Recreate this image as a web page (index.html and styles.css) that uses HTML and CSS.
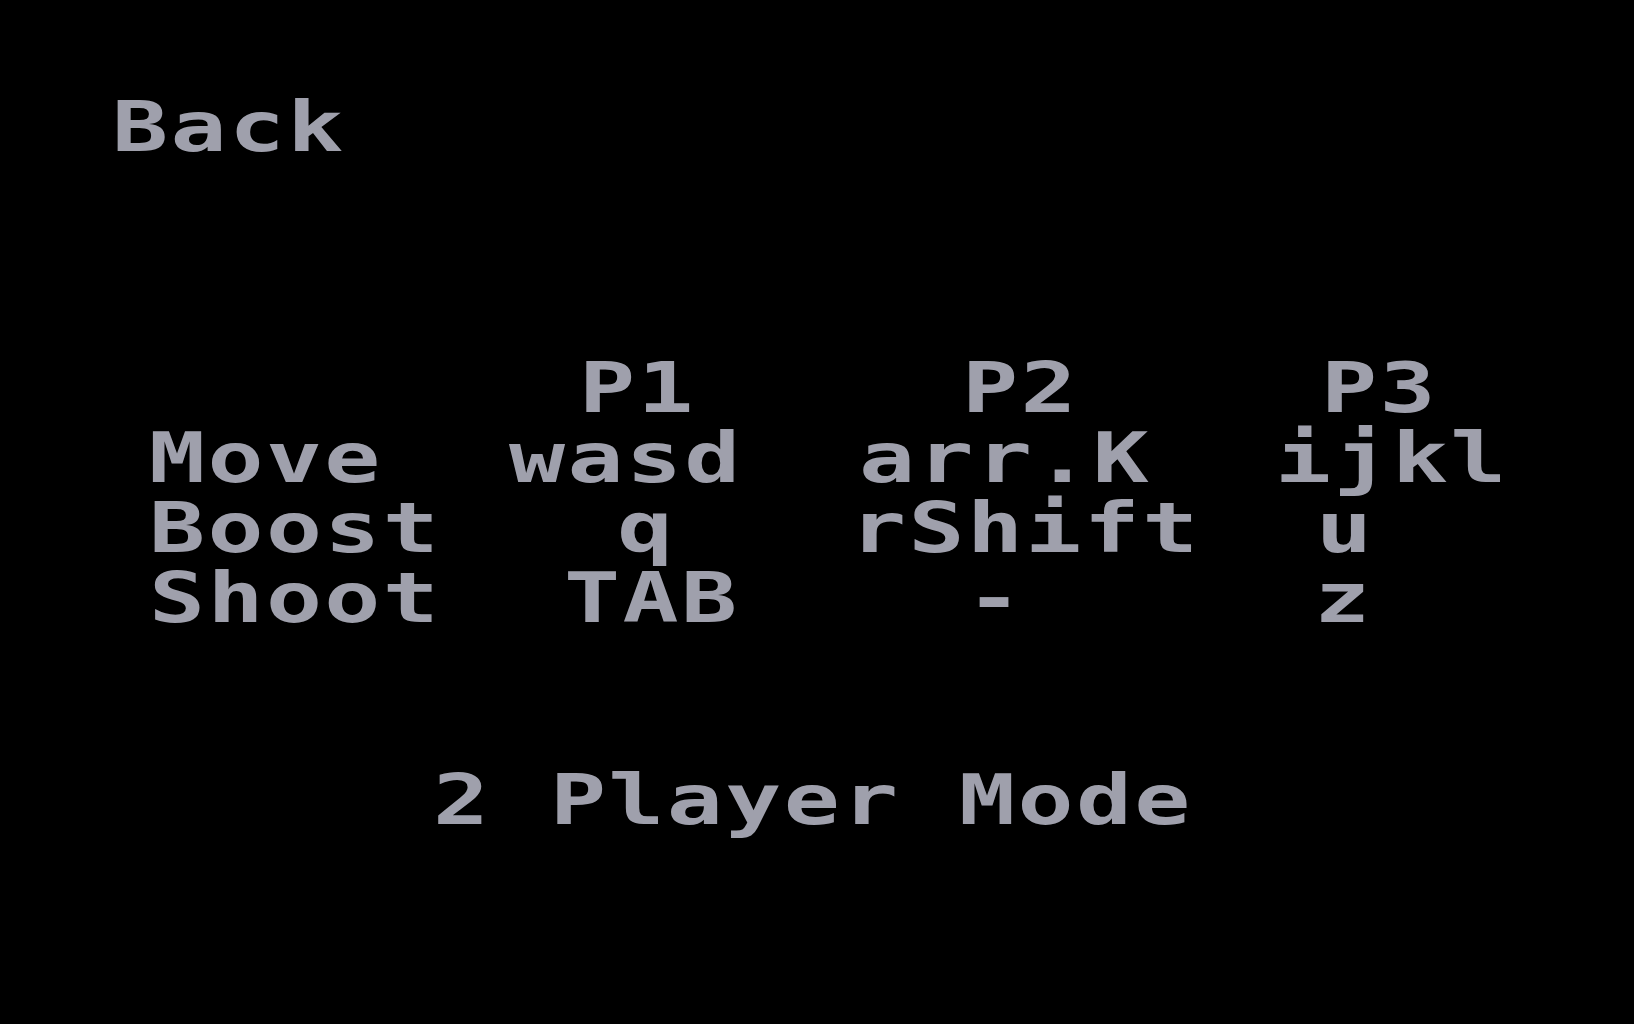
FILE: index.html
```html
<!DOCTYPE html>
<html>
<head>
<meta charset="utf-8">
<link rel="stylesheet" href="styles.css">
</head>
<body>
<div class="screen">
  <div class="back"><span class="t">Back</span></div>
  <div class="controls">
    <div class="cell"></div>
    <div class="cell off-p1"><span class="t">P1</span></div>
    <div class="cell off-p2"><span class="t">P2</span></div>
    <div class="cell off-p3"><span class="t">P3</span></div>

    <div class="cell"><span class="t">Move</span></div>
    <div class="cell"><span class="t">wasd</span></div>
    <div class="cell off-arr"><span class="t">arr.K</span></div>
    <div class="cell"><span class="t">ijkl</span></div>

    <div class="cell"><span class="t">Boost</span></div>
    <div class="cell off-q"><span class="t">q</span></div>
    <div class="cell off-shift"><span class="t">rShift</span></div>
    <div class="cell off-u"><span class="t">u</span></div>

    <div class="cell"><span class="t">Shoot</span></div>
    <div class="cell off-tab"><span class="t">TAB</span></div>
    <div class="cell off-dash"><span class="t">-</span></div>
    <div class="cell off-z"><span class="t">z</span></div>
  </div>
  <div class="mode"><span class="t">2 Player Mode</span></div>
</div>
</body>
</html>
```

FILE: styles.css
```css
html, body {
  margin: 0;
  padding: 0;
  background: #000;
}

.screen {
  width: 1634px;
  height: 1024px;
  box-sizing: border-box;
  padding-top: 92px;
  display: flex;
  flex-direction: column;
  color: #9fa0ac;
  font-family: "DejaVu Sans Mono", "Liberation Mono", monospace;
  font-weight: bold;
  font-size: 70px;
  line-height: 70px;
  overflow: hidden;
}

.t {
  display: inline-block;
  white-space: pre;
  letter-spacing: 1.8px;
  transform: scaleX(1.33);
  transform-origin: 0 0;
}

.back {
  height: 70px;
  padding-left: 112px;
}

.controls {
  margin-top: 191px;
  padding-left: 149px;
  display: grid;
  grid-template-columns: 360px 349px 417px 300px;
  grid-auto-rows: 70px;
}

.cell {
  height: 70px;
}

.off-p1 { padding-left: 70px; }
.off-p2 { padding-left: 104px; }
.off-p3 { padding-left: 46px; }
.off-arr { padding-left: 1px; }
.off-shift { margin-left: -8px; }
.off-q { padding-left: 108px; }
.off-u { padding-left: 41px; }
.off-tab { padding-left: 55px; }
.off-dash { padding-left: 108px; }
.off-z { padding-left: 39px; }

.mode {
  margin-top: 132px;
  height: 70px;
  padding-left: 433px;
}
```
